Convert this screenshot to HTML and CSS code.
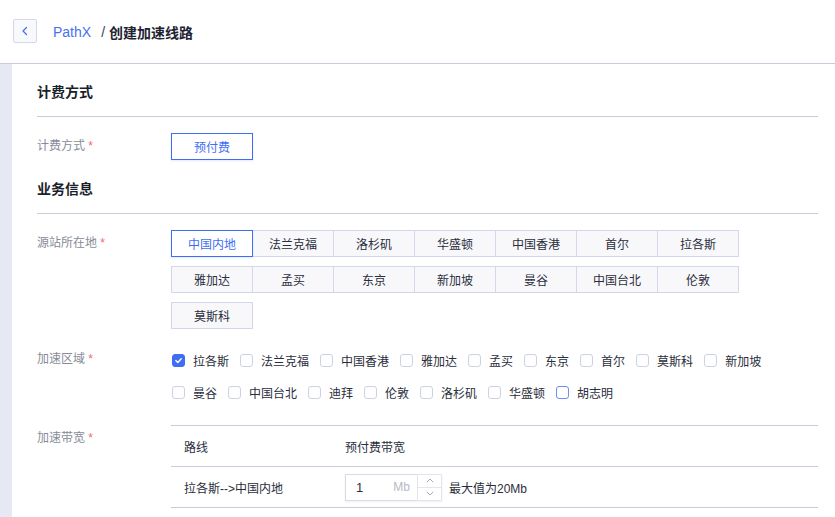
FILE: index.html
```html
<!DOCTYPE html>
<html lang="zh-CN">
<head>
<meta charset="utf-8">
<title>创建加速线路</title>
<link rel="stylesheet" href="styles.css">
</head>
<body>
<header class="topbar">
  <button class="back-btn" aria-label="返回">
    <svg width="10" height="10" viewBox="0 0 10 10"><polyline points="6.5,1.5 3,5 6.5,8.5" fill="none" stroke="#3f6ef3" stroke-width="1.2" stroke-linecap="round" stroke-linejoin="round"/></svg>
  </button>
  <span class="crumb-link">PathX</span>
  <span class="crumb-sep">/</span>
  <span class="crumb-current">创建加速线路</span>
</header>
<div class="main">
  <div class="side"></div>
  <div class="content">
    <section class="section first">
      <h2 class="section-title">计费方式</h2>
      <div class="form-row">
        <div class="label">计费方式 <span class="req">*</span></div>
        <div class="control">
          <button class="opt-btn active single">预付费</button>
        </div>
      </div>
    </section>

    <section class="section">
      <h2 class="section-title">业务信息</h2>
      <div class="form-row">
        <div class="label">源站所在地 <span class="req">*</span></div>
        <div class="control">
          <div class="btn-grid">
            <button class="opt-btn active">中国内地</button>
            <button class="opt-btn">法兰克福</button>
            <button class="opt-btn">洛杉矶</button>
            <button class="opt-btn">华盛顿</button>
            <button class="opt-btn">中国香港</button>
            <button class="opt-btn">首尔</button>
            <button class="opt-btn">拉各斯</button>
            <button class="opt-btn">雅加达</button>
            <button class="opt-btn">孟买</button>
            <button class="opt-btn">东京</button>
            <button class="opt-btn">新加坡</button>
            <button class="opt-btn">曼谷</button>
            <button class="opt-btn">中国台北</button>
            <button class="opt-btn">伦敦</button>
            <button class="opt-btn">莫斯科</button>
          </div>
        </div>
      </div>

      <div class="form-row row-cb">
        <div class="label label-cb">加速区域 <span class="req">*</span></div>
        <div class="control">
          <div class="cb-group">
            <label class="cb-item"><span class="cb checked"><svg width="9" height="9" viewBox="0 0 9 9"><polyline points="1.8,4.6 3.8,6.4 7.2,2.8" fill="none" stroke="#fff" stroke-width="1.4" stroke-linecap="round" stroke-linejoin="round"/></svg></span>拉各斯</label>
            <label class="cb-item"><span class="cb"></span>法兰克福</label>
            <label class="cb-item"><span class="cb"></span>中国香港</label>
            <label class="cb-item"><span class="cb"></span>雅加达</label>
            <label class="cb-item"><span class="cb"></span>孟买</label>
            <label class="cb-item"><span class="cb"></span>东京</label>
            <label class="cb-item"><span class="cb"></span>首尔</label>
            <label class="cb-item"><span class="cb"></span>莫斯科</label>
            <label class="cb-item"><span class="cb"></span>新加坡</label>
            <label class="cb-item"><span class="cb"></span>曼谷</label>
            <label class="cb-item"><span class="cb"></span>中国台北</label>
            <label class="cb-item"><span class="cb"></span>迪拜</label>
            <label class="cb-item"><span class="cb"></span>伦敦</label>
            <label class="cb-item"><span class="cb"></span>洛杉矶</label>
            <label class="cb-item"><span class="cb"></span>华盛顿</label>
            <label class="cb-item"><span class="cb hover"></span>胡志明</label>
          </div>
        </div>
      </div>

      <div class="form-row row-table">
        <div class="label">加速带宽 <span class="req">*</span></div>
        <div class="control">
          <table class="bw-table">
            <thead>
              <tr><th class="col-route">路线</th><th>预付费带宽</th></tr>
            </thead>
            <tbody>
              <tr>
                <td class="col-route">拉各斯--&gt;中国内地</td>
                <td>
                  <div class="bw-cell">
                    <div class="num-input">
                      <div class="num-field"><span class="num-val">1</span><span class="num-unit">Mb</span></div>
                      <div class="stepper">
                        <span class="step up"><svg width="8" height="5" viewBox="0 0 8 5"><polyline points="0.8,4.2 4,1 7.2,4.2" fill="none" stroke="#9aa0ad" stroke-width="0.9"/></svg></span>
                        <span class="step down"><svg width="8" height="5" viewBox="0 0 8 5"><polyline points="0.8,0.8 4,4 7.2,0.8" fill="none" stroke="#9aa0ad" stroke-width="0.9"/></svg></span>
                      </div>
                    </div>
                    <span class="bw-hint">最大值为20Mb</span>
                  </div>
                </td>
              </tr>
            </tbody>
          </table>
        </div>
      </div>
    </section>
  </div>
</div>
</body>
</html>
```

FILE: styles.css
```css
* { box-sizing: border-box; }
html, body {
  margin: 0;
  padding: 0;
  height: 100%;
  overflow: hidden;
  background: #fff;
}
body {
  font-family: "Liberation Sans", "Noto Sans CJK SC", sans-serif;
  font-size: 12px;
  color: #2a2e3b;
}
button {
  font-family: inherit;
  margin: 0;
  padding: 0;
  cursor: pointer;
}

.topbar {
  height: 64px;
  display: flex;
  align-items: center;
  padding-left: 13px;
  border-bottom: 1px solid #c8ccd8;
  font-size: 14px;
}
.back-btn {
  width: 24px;
  height: 24px;
  border: 1px solid #d5d8e6;
  background: #f8f9fc;
  border-radius: 2px;
  display: flex;
  align-items: center;
  justify-content: center;
  margin-top: -2px;
}
.crumb-link {
  margin-left: 16px;
  color: #4570f0;
}
.crumb-sep {
  margin-left: 10px;
  color: #3b4050;
}
.crumb-current {
  margin-left: 4px;
  color: #1e2332;
  font-weight: 600;
}

.main {
  display: flex;
  height: calc(100% - 64px);
}
.side {
  width: 12px;
  flex: none;
  background: #e6e8f3;
}
.content {
  flex: 1;
  padding: 0 17px 0 25px;
}

.section-title {
  margin: 0;
  padding: 0 0 14px;
  line-height: 20px;
  font-size: 14px;
  font-weight: 600;
  color: #1b1f2c;
  border-bottom: 1px solid #c8ccd8;
}
.section.first { padding-top: 18px; }
.section + .section { margin-top: 19px; }

.form-row {
  display: flex;
  margin-top: 16px;
}
.form-row.row-cb { margin-top: 15px; }
.form-row.row-table { margin-top: 17px; }
.label {
  width: 134px;
  flex: none;
  line-height: 27px;
  color: #878c98;
}
.label-cb { padding-top: 2px; }
.req { color: #f36a6a; }
.control { flex: 1; }

.btn-grid {
  display: grid;
  grid-template-columns: repeat(7, 81px);
  row-gap: 9px;
}
.opt-btn {
  height: 27px;
  width: 82px;
  background: #f8f8fb;
  border: 1px solid #d3d7ea;
  font-size: 12px;
  color: #2a2e3b;
  position: relative;
}
.opt-btn.active {
  background: #fff;
  border-color: #3f6ef3;
  color: #3f6ef3;
  z-index: 1;
  box-shadow: 0 1px 2px rgba(63, 110, 243, 0.15);
}

.cb-group {
  display: flex;
  flex-wrap: wrap;
  padding-left: 1px;
}
.cb-item {
  display: flex;
  align-items: center;
  height: 32px;
  margin-right: 11px;
  color: #2a2e3b;
}
.cb {
  width: 13px;
  height: 13px;
  border: 1px solid #cdd1e2;
  border-radius: 3px;
  background: #fff;
  margin-right: 8px;
  display: flex;
  align-items: center;
  justify-content: center;
}
.cb.checked {
  background: #3f6ef3;
  border-color: #3f6ef3;
}
.cb.hover { border-color: #6d8ef2; }

.bw-table {
  width: 100%;
  border-collapse: collapse;
  border-top: 1px solid #c8ccd8;
}
.bw-table th,
.bw-table td {
  height: 41px;
  padding: 0 0 0 13px;
  text-align: left;
  font-weight: normal;
  color: #2a2e3b;
  border-bottom: 1px solid #c8ccd8;
}
.bw-table .col-route { width: 174px; }
.bw-table td:not(.col-route),
.bw-table th:not(.col-route) { padding-left: 0; }

.bw-cell {
  display: flex;
  align-items: center;
}
.num-input {
  display: flex;
  height: 27px;
  box-shadow: 0 1px 2px rgba(40, 50, 90, 0.08);
}
.num-field {
  width: 72px;
  border: 1px solid #d8dbe6;
  border-right: none;
  display: flex;
  align-items: center;
  justify-content: space-between;
  padding: 0 7px 0 10px;
  font-size: 13px;
}
.num-val { color: #2a2e3b; }
.num-unit { color: #b5b9c6; font-size: 12px; }
.stepper {
  width: 25px;
  border: 1px solid #e3e5ed;
  display: flex;
  flex-direction: column;
}
.step {
  flex: 1;
  display: flex;
  align-items: center;
  justify-content: center;
}
.step.up { border-bottom: 1px solid #e3e5ed; }
.bw-hint {
  margin-left: 7px;
  color: #2a2e3b;
}
```
